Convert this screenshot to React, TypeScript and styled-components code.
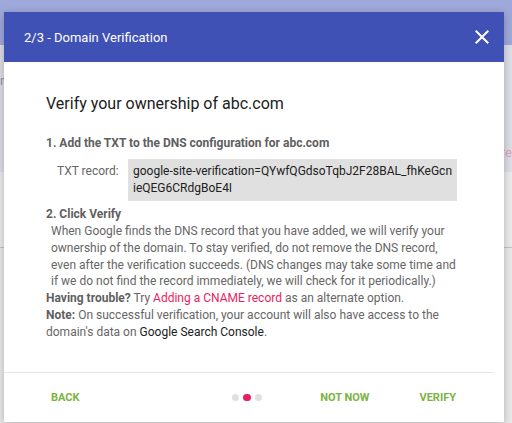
import React from 'react';
import styled, { createGlobalStyle } from 'styled-components';

const GlobalStyle = createGlobalStyle`
  html, body {
    margin: 0;
    padding: 0;
    width: 512px;
    height: 423px;
    overflow: hidden;
    font-family: Roboto, "Liberation Sans", Arial, sans-serif;
  }
  * { box-sizing: border-box; }
`;

const Page = styled.div`
  position: relative;
  width: 512px;
  height: 423px;
  background: #e9e9e9;
  overflow: hidden;
`;

const AppBar = styled.div`
  height: 45px;
  background: #9fa8da;
`;

const Band = styled.div`
  height: 127px;
  background: #dcdde6;
  display: flex;
  justify-content: space-between;
  align-items: flex-start;
  padding-top: 30px;
  font-size: 13px;
  color: #8f8f8f;
`;

const BandText = styled.span<{ $pink?: boolean; $offset: number }>`
  margin-top: ${(p) => p.$offset}px;
  color: ${(p) => (p.$pink ? '#e8a0b8' : '#9a9290')};
`;

const Section = styled.div`
  height: 76px;
  border-bottom: 1px solid #c4c4c4;
  background: #ebebeb;
`;

const Dialog = styled.div`
  position: absolute;
  top: 12px;
  left: 4px;
  width: 500px;
  height: 410px;
  background: #fff;
  box-shadow: 0 2px 8px rgba(0, 0, 0, 0.25);
  display: flex;
  flex-direction: column;
`;

const Header = styled.div`
  height: 50px;
  flex: none;
  background: #3f51b5;
  color: #fff;
  display: flex;
  align-items: center;
  justify-content: space-between;
  padding: 0 10px 0 20px;
`;

const Title = styled.div`
  font-size: 13px;
  font-weight: 400;
`;

const CloseButton = styled.button`
  border: 0;
  background: transparent;
  padding: 0;
  width: 24px;
  height: 24px;
  display: flex;
  color: #fff;
  cursor: pointer;
`;

const Body = styled.div`
  flex: 1;
  padding: 32px 36px 0 42px;
  border-bottom: 1px solid #e6e6e6;
  margin-right: 10px;
`;

const Heading = styled.h2`
  margin: 0;
  font-size: 16px;
  line-height: 19px;
  font-weight: 400;
  color: #212121;
`;

const StepTitle = styled.div<{ $top: number }>`
  margin-top: ${(p) => p.$top}px;
  font-size: 12px;
  line-height: 17px;
  font-weight: 700;
  color: #5f5f5f;
`;

const RecordRow = styled.div`
  display: flex;
  align-items: flex-start;
  margin-top: 7px;
  padding-left: 11px;
  font-size: 12px;
  line-height: 17px;
`;

const RecordLabel = styled.span`
  color: #666;
  width: 71px;
  flex: none;
  padding-top: 4px;
`;

const RecordValue = styled.div`
  width: 329px;
  flex: none;
  background: #e0e0e0;
  color: #212121;
  padding: 4px 5px 4px 5px;
  word-break: break-all;
`;

const Paragraph = styled.p<{ $indent?: boolean }>`
  margin: 0;
  padding-left: ${(p) => (p.$indent ? 5 : 0)}px;
  font-size: 12px;
  line-height: 16.8px;
  color: #666;
`;

const Strong = styled.b`
  font-weight: 700;
  color: #5f5f5f;
`;

const Link = styled.a`
  color: #e91e63;
  text-decoration: none;
`;

const Dark = styled.span`
  color: #212121;
`;

const Footer = styled.div`
  height: 49px;
  flex: none;
  display: flex;
  align-items: center;
  padding: 0 48px 0 47px;
`;

const ActionButton = styled.button<{ $gap?: number }>`
  border: 0;
  background: transparent;
  padding: 0;
  margin-left: ${(p) => p.$gap ?? 0}px;
  font-family: Roboto, "Liberation Sans", Arial, sans-serif;
  font-size: 11px;
  font-weight: 700;
  color: #7cb342;
  text-transform: uppercase;
  cursor: pointer;
`;

const Spacer = styled.div`
  flex: 1;
`;

const Dots = styled.div`
  display: flex;
  gap: 4px;
`;

const Dot = styled.span<{ $active?: boolean }>`
  width: 7.5px;
  height: 7.5px;
  border-radius: 50%;
  background: ${(p) => (p.$active ? '#e91e63' : '#e0e0e0')};
`;

export default function App() {
  return (
    <>
      <GlobalStyle />
      <Page>
        <AppBar />
        <Band>
          <BandText $offset={-2}>n</BandText>
          <BandText $pink $offset={70}>re</BandText>
        </Band>
        <Section />
        <Dialog>
          <Header>
            <Title>2/3 - Domain Verification</Title>
            <CloseButton aria-label="Close">
              <svg width="24" height="24" viewBox="0 0 24 24" fill="currentColor">
                <path d="M19 6.41L17.59 5 12 10.59 6.41 5 5 6.41 10.59 12 5 17.59 6.41 19 12 13.41 17.59 19 19 17.59 13.41 12z" />
              </svg>
            </CloseButton>
          </Header>
          <Body>
            <Heading>Verify your ownership of abc.com</Heading>
            <StepTitle $top={22}>1. Add the TXT to the DNS configuration for abc.com</StepTitle>
            <RecordRow>
              <RecordLabel>TXT record:</RecordLabel>
              <RecordValue>google-site-verification=QYwfQGdsoTqbJ2F28BAL_fhKeGcnieQEG6CRdgBoE4I</RecordValue>
            </RecordRow>
            <StepTitle $top={5}>2. Click Verify</StepTitle>
            <Paragraph $indent>
              When Google finds the DNS record that you have added, we will verify your ownership of the
              domain. To stay verified, do not remove the DNS record, even after the verification
              succeeds. (DNS changes may take some time and if we do not find the record immediately, we
              will check for it periodically.)
            </Paragraph>
            <Paragraph>
              <Strong>Having trouble?</Strong> Try <Link href="#">Adding a CNAME record</Link> as an
              alternate option.
            </Paragraph>
            <Paragraph>
              <Strong>Note:</Strong> On successful verification, your account will also have access to the
              domain's data on <Dark>Google Search Console</Dark>.
            </Paragraph>
          </Body>
          <Footer>
            <ActionButton>Back</ActionButton>
            <Spacer />
            <Dots>
              <Dot />
              <Dot $active />
              <Dot />
            </Dots>
            <ActionButton $gap={58}>Not now</ActionButton>
            <ActionButton $gap={50}>Verify</ActionButton>
          </Footer>
        </Dialog>
      </Page>
    </>
  );
}
